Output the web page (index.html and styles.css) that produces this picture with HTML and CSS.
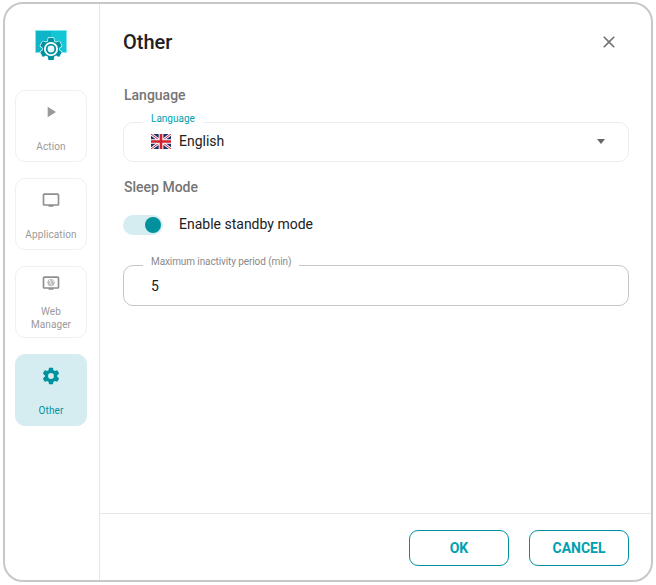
FILE: index.html
```html
<!DOCTYPE html>
<html lang="en">
<head>
  <meta charset="UTF-8" />
  <meta name="viewport" content="width=device-width, initial-scale=1" />
  <title>Settings - Other</title>
  <link rel="stylesheet" href="styles.css">
</head>
<body>
  <div class="dialog">
    <!-- Left navigation -->
    <nav class="sidebar">
      <div class="logo">
        <svg width="32" height="32" viewBox="0 0 32 32">
          <rect x="0" y="0" width="32" height="23" fill="#7fe6ef"/>
          <rect x="1" y="1" width="30" height="21" fill="#12c6d6"/>
          <rect x="1" y="1" width="15" height="21" fill="#0fb4c6"/>
          <g transform="translate(2.800 5.800) scale(1.100)">
            <path fill="#00919f" stroke="#e8fafc" stroke-width="1.200" paint-order="stroke" d="M19.430 12.980c.04-.32.07-.64.07-.98s-.03-.66-.07-.98l2.110-1.650c.19-.15.24-.42.12-.64l-2-3.460c-.12-.22-.39-.3-.61-.22l-2.490 1c-.52-.4-1.080-.73-1.690-.98l-.38-2.650A.49.49 0 0 0 14 2h-4c-.25 0-.46.18-.49.42l-.38 2.650c-.61.25-1.170.59-1.690.98l-2.490-1c-.23-.09-.49 0-.61.22l-2 3.460c-.13.22-.07.49.12.64l2.110 1.650c-.04.32-.07.65-.07.98s.03.66.07.98l-2.110 1.650c-.19.15-.24.42-.12.64l2 3.460c.12.22.39.3.61.22l2.490-1c.52.4 1.080.73 1.690.98l.38 2.650c.03.24.24.42.49.42h4c.25 0 .46-.18.49-.42l.38-2.650c.61-.25 1.170-.59 1.690-.98l2.490 1c.23.09.49 0 .61-.22l2-3.460c.12-.22.07-.49-.12-.64z"/>
          </g>
          <circle cx="16" cy="19" r="7" fill="#fff"/>
          <circle cx="16" cy="19" r="4.300" fill="#e8fafc" stroke="#00919f" stroke-width="1.800"/>
        </svg>
      </div>
      <a class="nav-item">
        <svg class="nav-icon" width="20" height="20" viewBox="0 0 20 20"><path fill="#9a9a9a" d="M6.700 4.700v10.600l8.300-5.300z"/></svg>
        <span class="nav-label">Action</span>
      </a>
      <a class="nav-item">
        <svg class="nav-icon" width="20" height="20" viewBox="0 0 24 24"><path fill="#8f8f8f" d="M20 4H4c-1.100 0-2 .9-2 2v11c0 1.100.9 2 2 2h5v1h6v-1h5c1.100 0 2-.9 2-2V6c0-1.100-.9-2-2-2zm0 13H4V6h16z"/></svg>
        <span class="nav-label">Application</span>
      </a>
      <a class="nav-item web">
        <svg class="nav-icon" width="20" height="20" viewBox="0 0 24 24">
          <path fill="#8f8f8f" d="M20 4H4c-1.100 0-2 .9-2 2v11c0 1.100.9 2 2 2h5v1h6v-1h5c1.100 0 2-.9 2-2V6c0-1.100-.9-2-2-2zm0 13H4V6h16z"/>
          <circle cx="12" cy="11.500" r="4.400" fill="#8f8f8f" opacity=".6"/>
          <path fill="none" stroke="#fff" stroke-width="1" d="M9.500 8.500l2.500 1.500-1 2.500 2.500 2.500M14 8l1 2.500"/>
        </svg>
        <span class="nav-label">Web<br>Manager</span>
      </a>
      <a class="nav-item active">
        <svg class="nav-icon" width="20" height="20" viewBox="0 0 24 24"><path fill="#00919f" d="M19.430 12.980c.04-.32.07-.64.07-.98s-.03-.66-.07-.98l2.110-1.650c.19-.15.24-.42.12-.64l-2-3.460c-.12-.22-.39-.3-.61-.22l-2.490 1c-.52-.4-1.080-.73-1.690-.98l-.38-2.650A.49.49 0 0 0 14 2h-4c-.25 0-.46.18-.49.42l-.38 2.650c-.61.25-1.170.59-1.690.98l-2.490-1c-.23-.09-.49 0-.61.22l-2 3.460c-.13.22-.07.49.12.64l2.110 1.650c-.04.32-.07.65-.07.98s.03.66.07.98l-2.110 1.650c-.19.15-.24.42-.12.64l2 3.460c.12.22.39.3.61.22l2.490-1c.52.4 1.080.73 1.690.98l.38 2.650c.03.24.24.42.49.42h4c.25 0 .46-.18.49-.42l.38-2.650c.61-.25 1.170-.59 1.690-.98l2.490 1c.23.09.49 0 .61-.22l2-3.460c.12-.22.07-.49-.12-.64zM12 15.500a3.500 3.500 0 1 1 0-7 3.500 3.500 0 0 1 0 7z"/></svg>
        <span class="nav-label">Other</span>
      </a>
    </nav>

    <main class="main">
      <header class="main-head">
        <h1>Other</h1>
        <svg class="close" width="20" height="20" viewBox="0 0 24 24"><path fill="#757575" d="M19 6.410L17.590 5 12 10.590 6.410 5 5 6.410 10.590 12 5 17.590 6.410 19 12 13.410 17.590 19 19 17.590 13.410 12z"/></svg>
      </header>

      <div class="content">
        <h2 class="section-title">Language</h2>
        <div class="field select-field">
          <span class="field-label accent">Language</span>
          <svg class="flag" width="20" height="15" viewBox="0 0 60 45">
            <rect width="60" height="45" fill="#1f2f70"/>
            <path stroke="#fff" stroke-width="8" d="M0 0l60 45M60 0L0 45"/>
            <path stroke="#d3202f" stroke-width="3" d="M0 0l60 45M60 0L0 45"/>
            <path stroke="#fff" stroke-width="14" d="M30 0v45M0 22.500h60"/>
            <path stroke="#d3202f" stroke-width="8" d="M30 0v45M0 22.500h60"/>
          </svg>
          <span class="value">English</span>
          <svg class="caret" width="8" height="5" viewBox="0 0 8 5"><path fill="#666" d="M0 0h8L4 5z"/></svg>
        </div>

        <h2 class="section-title sleep-title">Sleep Mode</h2>
        <div class="toggle-row">
          <span class="toggle"><span class="knob"></span></span>
          <span class="toggle-label">Enable standby mode</span>
        </div>

        <div class="field input-field">
          <span class="field-label long">Maximum inactivity period (min)</span>
          <span class="value">5</span>
        </div>
      </div>

      <footer class="main-foot">
        <button class="btn">OK</button>
        <button class="btn">CANCEL</button>
      </footer>
    </main>
  </div>
</body>
</html>
```

FILE: styles.css
```css
html, body {
  margin: 0;
  padding: 0;
  background-color: #fff;
  font-family: Roboto, "Liberation Sans", sans-serif;
}

body {
  padding: 2px 3px;
  height: 585px;
  box-sizing: border-box;
  overflow: hidden;
}

.dialog {
  display: flex;
  width: 650px;
  height: 580px;
  box-sizing: border-box;
  border: 2px solid #c8c8c8;
  border-radius: 20px;
  background: #fff;
  overflow: hidden;
}

/* === Sidebar === */
.sidebar {
  width: 95px;
  flex-shrink: 0;
  box-sizing: border-box;
  border-right: 1px solid #e6e6e6;
  display: flex;
  flex-direction: column;
  align-items: center;
  gap: 16px;
  padding: 26px 2px 0 0;
}

.logo {
  height: 32px;
  width: 32px;
  margin-bottom: 12px;
}

.logo svg {
  display: block;
}

.nav-item {
  width: 72px;
  height: 72px;
  box-sizing: border-box;
  border: 1px solid #f0f0f0;
  border-radius: 10px;
  display: flex;
  flex-direction: column;
  align-items: center;
  text-align: center;
  color: #9a9a9a;
  padding-top: 11px;
}

.nav-icon {
  flex-shrink: 0;
}

.nav-label {
  font-size: 10px;
  line-height: 13px;
  margin-top: 18px;
  letter-spacing: 0.1px;
}

.nav-item.web {
  padding-top: 6px;
}

.nav-item.web .nav-label {
  margin-top: 12px;
}

.nav-item.active {
  background: #d5edf1;
  border-color: #d5edf1;
  color: #00919f;
}

/* === Main panel === */
.main {
  flex: 1;
  display: flex;
  flex-direction: column;
  min-width: 0;
}

.main-head {
  display: flex;
  justify-content: space-between;
  align-items: center;
  padding: 22px 32px 0 23px;
  height: 32px;
}

.main-head h1 {
  margin: 0;
  font-size: 20px;
  font-weight: 500;
  color: #212121;
}

.content {
  flex: 1;
  padding: 0 22px 0 23px;
}

.section-title {
  margin: 27px 0 0 1px;
  font-size: 14px;
  line-height: 20px;
  font-weight: 500;
  color: #757575;
}

.sleep-title {
  margin-top: 15px;
}

/* Outlined field with floating label */
.field {
  position: relative;
  padding: 0 23px 0 27px;
  border: 1px solid #ececec;
  border-radius: 10px;
  height: 40px;
  box-sizing: border-box;
  display: flex;
  align-items: center;
}

.field-label {
  position: absolute;
  top: -9px;
  left: 19px;
  padding: 0 8px;
  background: #fff;
  font-size: 10px;
  line-height: 10px;
  color: #8a8a8a;
}

.field-label.accent {
  color: #00a0b0;
}

.field-label.long {
  letter-spacing: -0.1px;
}

.select-field {
  margin-top: 17px;
  padding-bottom: 2px;
}

.input-field {
  margin-top: 30px;
  height: 41px;
  border-color: #c6c6c6;
}

.value {
  font-size: 14px;
  color: #212121;
}

.flag {
  margin-right: 8px;
  flex-shrink: 0;
}

.caret {
  margin-left: auto;
}

/* Toggle */
.toggle-row {
  display: flex;
  align-items: center;
  margin-top: 18px;
}

.toggle {
  display: block;
  position: relative;
  width: 40px;
  height: 20px;
  border-radius: 10px;
  background: #d5edf1;
  flex-shrink: 0;
}

.knob {
  position: absolute;
  right: 2px;
  top: 2px;
  width: 16px;
  height: 16px;
  border-radius: 50%;
  background: #00919f;
}

.toggle-label {
  margin: 0 0 2px 16px;
  font-size: 14px;
  color: #212121;
}

/* Footer */
.main-foot {
  border-top: 1px solid #e6e6e6;
  height: 67px;
  box-sizing: border-box;
  display: flex;
  justify-content: flex-end;
  gap: 20px;
  padding: 16px 22px 0 0;
}

.btn {
  width: 100px;
  height: 36px;
  background: #fff;
  border: 1px solid #00919f;
  border-radius: 9px;
  font-family: inherit;
  font-size: 14px;
  font-weight: 700;
  color: #00a0b0;
  padding: 0;
}
```
